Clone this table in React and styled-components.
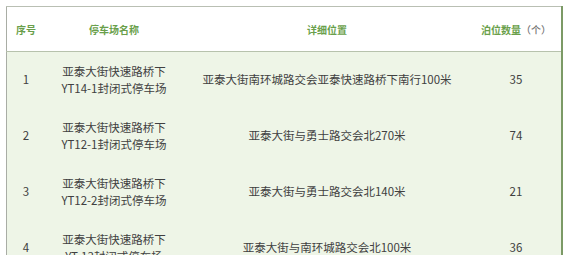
import React from 'react'
import styled, { createGlobalStyle } from 'styled-components'

const GlobalStyle = createGlobalStyle`
  html, body {
    margin: 0;
    padding: 0;
    background: #ffffff;
    overflow: hidden;
  }
  body {
    font-family: "Noto Sans CJK SC", "Noto Sans", sans-serif;
  }
`

const Page = styled.div`
  padding: 6px 6px 0 6px;
  width: 567px;
  height: 255px;
  box-sizing: border-box;
  overflow: hidden;
`

const Table = styled.table`
  width: 555px;
  border-collapse: collapse;
  table-layout: fixed;
  border-top: 1px solid #b9bfb3;
  border-left: 1px solid #a9ada5;
  border-right: 2px solid #7c9a66;
`

const HeadRow = styled.tr`
  background: #ffffff;
  height: 45px;
  border-bottom: 1px solid #b7c2ad;
`

const Th = styled.th`
  font-size: 10px;
  font-weight: 700;
  color: #6a9f4b;
  text-align: center;
  padding: 0;
  width: ${({ $w }) => $w}px;
`

const Unit = styled.span`
  color: #777;
  font-weight: 500;
`

const Row = styled.tr`
  background: #eef5e7;
  height: 56px;
`

const Td = styled.td`
  font-size: 11.5px;
  line-height: 17px;
  color: #404040;
  text-align: center;
  padding: 0;
  vertical-align: middle;
`

const rows = [
  { no: 1, name: ['亚泰大街快速路桥下', 'YT14-1封闭式停车场'], place: '亚泰大街南环城路交会亚泰快速路桥下南行100米', count: 35 },
  { no: 2, name: ['亚泰大街快速路桥下', 'YT12-1封闭式停车场'], place: '亚泰大街与勇士路交会北270米', count: 74 },
  { no: 3, name: ['亚泰大街快速路桥下', 'YT12-2封闭式停车场'], place: '亚泰大街与勇士路交会北140米', count: 21 },
  { no: 4, name: ['亚泰大街快速路桥下', 'YT-13封闭式停车场'], place: '亚泰大街与南环城路交会北100米', count: 36 },
]

const App = () => (
  <>
    <GlobalStyle />
    <Page>
      <Table>
        <thead>
          <HeadRow>
            <Th $w={38}>序号</Th>
            <Th $w={138}>停车场名称</Th>
            <Th $w={288}>详细位置</Th>
            <Th $w={90}>泊位数量<Unit>（个）</Unit></Th>
          </HeadRow>
        </thead>
        <tbody>
          {rows.map((r) => (
            <Row key={r.no}>
              <Td>{r.no}</Td>
              <Td>{r.name[0]}<br />{r.name[1]}</Td>
              <Td>{r.place}</Td>
              <Td>{r.count}</Td>
            </Row>
          ))}
        </tbody>
      </Table>
    </Page>
  </>
)

export default App
